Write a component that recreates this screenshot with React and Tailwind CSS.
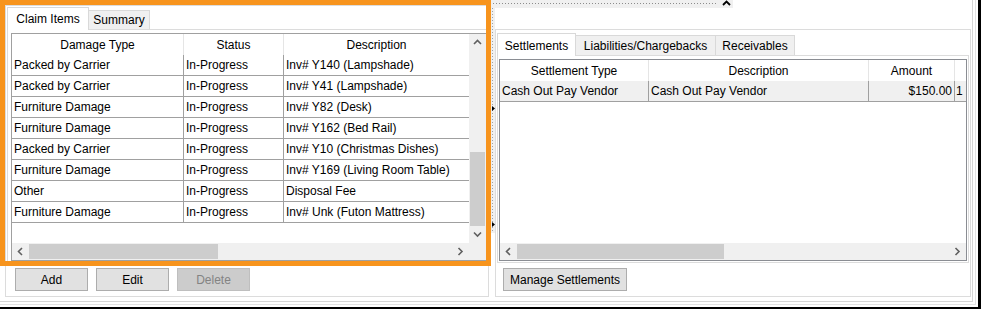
import React from "react";

const claimRows = [
  ["Packed by Carrier", "In-Progress", "Inv# Y140 (Lampshade)"],
  ["Packed by Carrier", "In-Progress", "Inv# Y41 (Lampshade)"],
  ["Furniture Damage", "In-Progress", "Inv# Y82 (Desk)"],
  ["Furniture Damage", "In-Progress", "Inv# Y162 (Bed Rail)"],
  ["Packed by Carrier", "In-Progress", "Inv# Y10 (Christmas Dishes)"],
  ["Furniture Damage", "In-Progress", "Inv# Y169 (Living Room Table)"],
  ["Other", "In-Progress", "Disposal Fee"],
  ["Furniture Damage", "In-Progress", "Inv# Unk (Futon Mattress)"],
];

const Chevron = ({ dir }) => {
  const vertical = dir === "up" || dir === "down";
  const pts = {
    up: "1,5 4.5,1.5 8,5",
    down: "1,1.5 4.5,5 8,1.5",
    left: "5,1 1.5,4.5 5,8",
    right: "1.5,1 5,4.5 1.5,8",
  }[dir];
  return (
    <svg width={vertical ? 9 : 7} height={vertical ? 7 : 9} viewBox={vertical ? "0 0 9 7" : "0 0 7 9"}>
      <polyline points={pts} fill="none" stroke="#606060" strokeWidth="1.6" />
    </svg>
  );
};

const HScroll = ({ thumb, rest, corner }) => (
  <div className="flex h-[17px] bg-[#f0f0f0] shrink-0">
    <div className="w-[17px] flex items-center justify-center">
      <Chevron dir="left" />
    </div>
    <div className="my-[1px] bg-[#cdcdcd]" style={{ width: thumb }} />
    <div style={{ width: rest }} />
    <div className="w-[17px] flex items-center justify-center">
      <Chevron dir="right" />
    </div>
    {corner && <div className="w-[17px]" />}
  </div>
);

const Button = ({ children, disabled, className = "" }) => (
  <button
    className={
      "h-[23px] border text-[12px] leading-none " +
      (disabled
        ? "bg-[#cccccc] border-[#bfbfbf] text-[#838383] "
        : "bg-[#e1e1e1] border-[#adadad] text-black ") +
      className
    }
  >
    {children}
  </button>
);

const ClaimTable = () => (
  <div className="w-[476px] h-[228px] border border-[#a0a0a0] bg-white flex flex-col">
    <div className="flex h-[209px]">
      <div className="w-[457px]">
        {/* Header */}
        <div className="flex h-[21px] items-center">
          <div className="w-[172px] h-full flex items-center justify-center border-r border-[#e5e5e5]">Damage Type</div>
          <div className="w-[100px] h-full flex items-center justify-center border-r border-[#e5e5e5]">Status</div>
          <div className="w-[185px] h-full flex items-center justify-center">Description</div>
        </div>
        {claimRows.map((r, i) => (
          <div key={i} className="flex h-[21px] border-b border-[#a0a0a0]">
            <div className="w-[172px] flex items-center pl-[2px] border-r border-[#a0a0a0] whitespace-nowrap">{r[0]}</div>
            <div className="w-[100px] flex items-center pl-[2px] border-r border-[#a0a0a0] whitespace-nowrap">{r[1]}</div>
            <div className="w-[185px] flex items-center pl-[2px] whitespace-nowrap">{r[2]}</div>
          </div>
        ))}
      </div>
      {/* Vertical scrollbar */}
      <div className="w-[17px] bg-[#f0f0f0] flex flex-col">
        <div className="h-[17px] flex items-center justify-center">
          <Chevron dir="up" />
        </div>
        <div className="flex-1 pt-[101px]">
          <div className="h-[74px] mx-[1px] bg-[#cdcdcd]" />
        </div>
        <div className="h-[17px] flex items-center justify-center">
          <Chevron dir="down" />
        </div>
      </div>
    </div>
    <HScroll thumb={189} rest={234} corner />
  </div>
);

const SettlementTable = () => (
  <div className="w-[468px] h-[202px] border border-[#8a8d93] bg-white flex flex-col">
    <div className="h-[183px] overflow-hidden">
      <div className="flex h-[21px]">
        <div className="w-[149px] flex items-center justify-center border-r border-[#e5e5e5]">Settlement Type</div>
        <div className="w-[220px] flex items-center justify-center border-r border-[#e5e5e5]">Description</div>
        <div className="w-[86px] flex items-center justify-center border-r border-[#e5e5e5]">Amount</div>
        <div className="w-[11px]" />
      </div>
      <div className="flex h-[21px] bg-[#f0f0f0] border-b border-[#a0a0a0]">
        <div className="w-[149px] flex items-center pl-[2px] border-r border-[#a0a0a0] whitespace-nowrap">Cash Out Pay Vendor</div>
        <div className="w-[220px] flex items-center pl-[2px] border-r border-[#a0a0a0] whitespace-nowrap">Cash Out Pay Vendor</div>
        <div className="w-[86px] flex items-center justify-end pr-[2px] border-r border-[#a0a0a0]">$150.00</div>
        <div className="w-[11px] flex items-center pl-[1px] whitespace-nowrap">1</div>
      </div>
    </div>
    <HScroll thumb={207} rest={225} />
  </div>
);

export default function App() {
  return (
    <div className="w-[981px] h-[309px] bg-white border-r-[3px] border-b-[2px] border-black overflow-hidden font-['Liberation_Sans',Arial,sans-serif] text-[12px] text-black">
      <div className="h-full pr-[2px] pb-[2px]">
        <div className="h-full border-r border-b border-[#e3e3e3] pr-[2px] pb-[2px]">
          <div className="h-full border-r border-b border-[#d5d5d5] flex">
            {/* Left column */}
            <div className="w-[491px] relative shrink-0">
              <div className="ml-[5px] mt-[5px] w-[484px] h-[292px] border border-[#dcdcdc]">
                <div className="ml-[1px] mt-[1px] flex items-end h-[22px]">
                  <div className="relative z-10 w-[82px] h-[23px] -mb-[1px] bg-white border-l border-t border-r border-[#d9d9d9] flex items-start justify-center pt-[2px]">
                    Claim Items
                  </div>
                  <div className="w-[61px] h-[19px] bg-[#f0f0f0] border-t border-r border-[#d9d9d9] flex items-center justify-center">
                    Summary
                  </div>
                </div>
                <div className="ml-[1px] w-[481px] h-[234px] border border-[#dcdcdc] pl-[3px] pt-[3px]">
                  <ClaimTable />
                </div>
                <div className="flex gap-[8px] pl-[9px] mt-[5px]">
                  <Button className="w-[73px]">Add</Button>
                  <Button className="w-[73px]">Edit</Button>
                  <Button className="w-[73px]" disabled>Delete</Button>
                </div>
              </div>
              {/* highlight frame */}
              <div className="absolute left-0 top-0 w-[491px] h-[266px] border-[5px] border-[#f7941d] pointer-events-none z-20" />
            </div>

            {/* Right column */}
            <div className="flex-1 flex flex-col">
              <div className="h-[8px] flex">
                <div className="w-[242px] h-[8px] bg-[#f0f0f0] flex items-start">
                  <div className="ml-[2px] mt-[3px] w-[224px] h-[1px] bg-[repeating-linear-gradient(90deg,#8c8c8c_0_1px,transparent_1px_3px)]" />
                  <svg width="9" height="6" viewBox="0 0 9 6" className="ml-[5px]">
                    <polyline points="1,5 4.5,1.5 8,5" fill="none" stroke="#000" strokeWidth="1.8" />
                  </svg>
                </div>
              </div>
              <div className="flex">
                {/* splitter */}
                <div className="w-[4px] h-[225px] bg-[#f0f0f0] flex flex-col">
                  <div className="h-full w-[1px] ml-[1px] bg-[repeating-linear-gradient(180deg,#a0a0a0_0_1px,transparent_1px_3px)] relative">
                    <svg width="3" height="5" viewBox="0 0 3 5" className="absolute left-0 top-[98px]">
                      <polygon points="0,0 3,2.5 0,5" fill="#000" />
                    </svg>
                    <svg width="3" height="5" viewBox="0 0 3 5" className="absolute left-0 top-[214px]">
                      <polygon points="0,0 3,2.5 0,5" fill="#000" />
                    </svg>
                  </div>
                </div>
                {/* group box */}
                <div className="mt-[21px] w-[476px] h-[268px] border border-[#dcdcdc]">
                  <div className="ml-[1px] mt-[3px] flex items-end h-[22px]">
                    <div className="relative z-10 w-[79px] h-[23px] -mb-[1px] bg-white border-l border-t border-r border-[#d9d9d9] flex items-start justify-center pt-[3px]">
                      Settlements
                    </div>
                    <div className="w-[140px] h-[20px] bg-[#f0f0f0] border-t border-r border-[#d9d9d9] flex items-center justify-center">
                      Liabilities/Chargebacks
                    </div>
                    <div className="w-[79px] h-[20px] bg-[#f0f0f0] border-t border-r border-[#d9d9d9] flex items-center justify-center">
                      Receivables
                    </div>
                  </div>
                  <div className="ml-[1px] w-[472px] h-[208px] border border-[#dcdcdc] pl-[1px] pt-[3px]">
                    <SettlementTable />
                  </div>
                  <div className="pl-[7px] mt-[5px]">
                    <Button className="w-[124px]">Manage Settlements</Button>
                  </div>
                </div>
              </div>
            </div>
          </div>
        </div>
      </div>
    </div>
  );
}
